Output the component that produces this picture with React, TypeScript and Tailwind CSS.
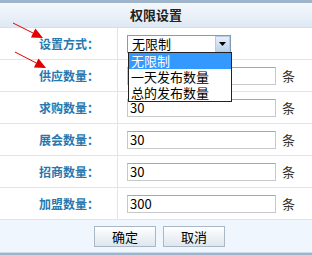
import React from 'react';

const rows = [
  { label: '供应数量：', value: '' },
  { label: '求购数量：', value: '30' },
  { label: '展会数量：', value: '30' },
  { label: '招商数量：', value: '30' },
  { label: '加盟数量：', value: '300' },
];

const font = { fontFamily: '"SimSun", "Noto Sans CJK SC", sans-serif' };

function Arrow({ x1, y1, x2, y2 }: { x1: number; y1: number; x2: number; y2: number }) {
  const a = Math.atan2(y2 - y1, x2 - x1);
  const l = 11;
  const w = 5;
  const bx = x2 - l * Math.cos(a);
  const by = y2 - l * Math.sin(a);
  const p1 = `${bx + w * Math.sin(a)},${by - w * Math.cos(a)}`;
  const p2 = `${bx - w * Math.sin(a)},${by + w * Math.cos(a)}`;
  return (
    <g>
      <line x1={x1} y1={y1} x2={bx} y2={by} stroke="#e00000" strokeWidth="1" />
      <polygon points={`${x2},${y2} ${p1} ${p2}`} fill="#e00000" />
    </g>
  );
}

export default function App() {
  return (
    <div className="relative w-[312px] h-[255px] bg-white overflow-hidden" style={font}>
      <div className="h-[3px] bg-[#9db4ca]" />
      <div className="h-[25px] flex items-center justify-center border-b border-[#d3e0ec] bg-gradient-to-b from-[#f4f8fc] to-[#dfe9f3]">
        <span className="text-[13px] font-bold text-[#222]" style={{ fontFamily: '"Noto Sans CJK SC", sans-serif' }}>权限设置</span>
      </div>

      <div className="flex h-[32px] border-b border-[#dbe6f0]">
        <div className="w-[118px] border-r border-[#dbe6f0] flex items-center justify-end pr-[18px] text-[12px] font-bold text-[#2878b0]" style={{ fontFamily: '"Noto Sans CJK SC", sans-serif' }}>
          设置方式：
        </div>
        <div className="flex items-center pl-[9px]">
          <div className="w-[104px] h-[18px] border border-[#7f9db9] flex items-center bg-white">
            <span className="flex-1 pl-[4px] text-[13px] leading-none text-black">无限制</span>
            <div className="w-[15px] h-[16px] border border-[#b6cae0] bg-gradient-to-b from-[#e6effa] to-[#bcd2ec] flex items-center justify-center">
              <svg width="7" height="4" viewBox="0 0 7 4"><polygon points="0,0 7,0 3.5,4" fill="#000" /></svg>
            </div>
          </div>
        </div>
      </div>

      {rows.map((r) => (
        <div key={r.label} className="flex h-[32px] border-b border-[#dbe6f0]">
          <div className="w-[118px] border-r border-[#dbe6f0] flex items-center justify-end pr-[18px] text-[12px] font-bold text-[#2878b0]" style={{ fontFamily: '"Noto Sans CJK SC", sans-serif' }}>
            {r.label}
          </div>
          <div className="flex items-center pl-[9px]">
            <div className="w-[149px] h-[18px] border border-[#c8c8c8] border-t-[#a8a8a8] flex items-center pl-[2px] text-[13px] leading-none text-black bg-white">
              {r.value}
            </div>
            <span className="ml-[6px] text-[13px] text-[#333]">条</span>
          </div>
        </div>
      ))}

      <div className="h-[32px] bg-[#eff6fd] flex items-center justify-center gap-[7px] pl-[7px]">
        <button className="w-[62px] h-[21px] border border-[#aab8c6] bg-gradient-to-b from-[#ffffff] to-[#dde6ee] text-[13px] text-black leading-none">确定</button>
        <button className="w-[62px] h-[21px] border border-[#aab8c6] bg-gradient-to-b from-[#ffffff] to-[#dde6ee] text-[13px] text-black leading-none">取消</button>
      </div>
      <div className="h-[1px] bg-[#c9dbea]" />
      <div className="h-[2px] bg-[#9db4ca]" />

      <div className="absolute left-[128px] top-[52px] w-[104px] border border-[#222] bg-white text-[13px] leading-[16px] text-black">
        <div className="bg-[#3399ff] text-white pl-[2px] h-[16px]">无限制</div>
        <div className="pl-[2px] h-[16px]">一天发布数量</div>
        <div className="pl-[2px] h-[16px]">总的发布数量</div>
      </div>

      <svg className="absolute left-0 top-0" width="312" height="255">
        <Arrow x1={13} y1={23} x2={43} y2={38} />
        <Arrow x1={15} y1={52} x2={46} y2={68} />
      </svg>
    </div>
  );
}
